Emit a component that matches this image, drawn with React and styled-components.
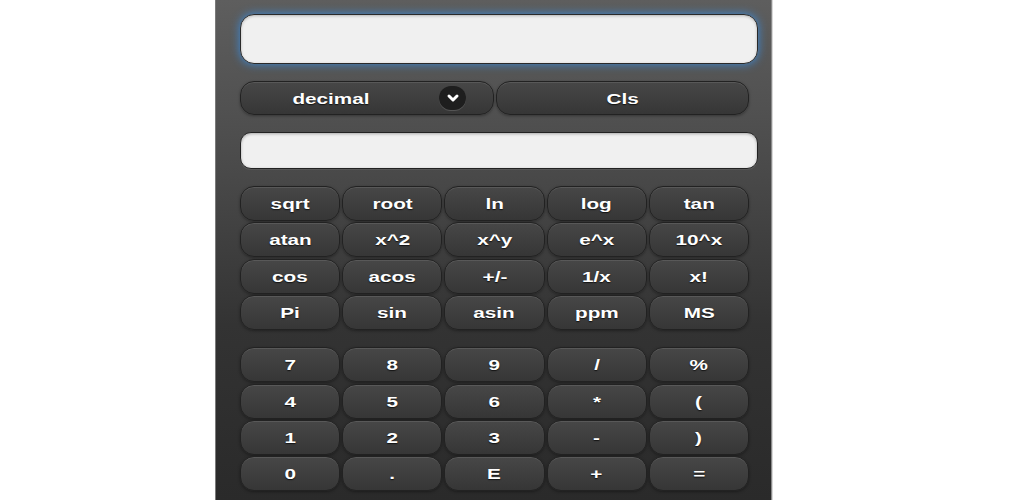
import React from 'react'
import styled, { createGlobalStyle } from 'styled-components'

const GlobalStyle = createGlobalStyle`
    html, body {
        margin: 0;
        padding: 0;
        background: #fff;
        font-family: "Liberation Sans", Arial, sans-serif;
    }
`

const scientific = [
    'sqrt', 'root', 'ln', 'log', 'tan',
    'atan', 'x^2', 'x^y', 'e^x', '10^x',
    'cos', 'acos', '+/-', '1/x', 'x!',
    'Pi', 'sin', 'asin', 'ppm', 'MS',
]

const basic = [
    '7', '8', '9', '/', '%',
    '4', '5', '6', '*', '(',
    '1', '2', '3', '-', ')',
    '0', '.', 'E', '+', '=',
]

function App() {
    return (
        <>
        <GlobalStyle />
        <Page>
            <Panel>
                <Display readOnly />
                <ControlRow>
                    <Button as="div">
                        <Label $shift={-72}>decimal</Label>
                        <ArrowIcon>
                            <svg width="14" height="14" viewBox="0 0 14 14">
                                <path d="M3 5 L7 9 L11 5" fill="none" stroke="#fff" strokeWidth="3" strokeLinecap="round" strokeLinejoin="round" />
                            </svg>
                        </ArrowIcon>
                    </Button>
                    <Button><Label>Cls</Label></Button>
                </ControlRow>
                <Entry readOnly />
                <Keys>
                    {scientific.map((k) => <Button key={k}><Label>{k}</Label></Button>)}
                </Keys>
                <Keys $top={17}>
                    {basic.map((k) => <Button key={k}><Label>{k}</Label></Button>)}
                </Keys>
            </Panel>
        </Page>
        </>
    )
}

export default App

const Page = styled.div`
    display: flex;
    justify-content: flex-start;
    height: 500px;
    overflow: hidden;
    background: #fff;
`

const Panel = styled.div`
    margin-left: 215px;
    width: 557px;
    height: 500px;
    box-sizing: border-box;
    padding: 14px 14px 0 24px;
    background: linear-gradient(#5e5e5e 0%, #494949 35%, #333 65%, #2a2a2a 100%);
    border-left: 1px solid #7a7a7a;
    border-right: 1px solid #8a8a8a;
    box-shadow: 1px 0 0 #d8d8d8;
`

const Display = styled.input`
    display: block;
    box-sizing: border-box;
    width: 518px;
    height: 50px;
    margin: 0;
    border: 1px solid #2a2a2a;
    border-radius: 14px;
    background: #f0f0f0;
    box-shadow: 0 0 10px #3b8ad8, inset 0 1px 3px rgba(0, 0, 0, 0.25);
    outline: none;
`

const Entry = styled(Display)`
    height: 37px;
    border-radius: 11px;
    margin-top: 17px;
    border-color: #222;
    box-shadow: inset 0 1px 3px rgba(0, 0, 0, 0.3), 0 1px 0 rgba(255, 255, 255, 0.08);
`

const ControlRow = styled.div`
    display: grid;
    grid-template-columns: 254px 253px;
    column-gap: 2px;
    margin-top: 17px;
    height: 34px;
`

const Keys = styled.div`
    display: grid;
    grid-template-columns: repeat(5, 1fr);
    column-gap: 2px;
    row-gap: 1.4px;
    grid-auto-rows: 35px;
    width: 509px;
    margin-top: ${(p) => p.$top || 17}px;
`

const Button = styled.button`
    position: relative;
    display: flex;
    align-items: center;
    justify-content: center;
    box-sizing: border-box;
    margin: 0;
    padding: 0;
    border: 1px solid #222;
    border-radius: 14px;
    background: linear-gradient(#474747, #363636);
    box-shadow: inset 0 1px 0 rgba(255, 255, 255, 0.1), 0 1px 3px rgba(0, 0, 0, 0.35);
    color: #fff;
    font-family: "Liberation Sans", Arial, sans-serif;
    font-weight: bold;
    font-size: 15px;
    text-shadow: 0 1px 1px #111;
    cursor: pointer;
`

const Label = styled.span`
    display: inline-block;
    transform: translateX(${(p) => (p.$shift || 0) / 2}px) scaleX(1.38);
`

const ArrowIcon = styled.span`
    position: absolute;
    right: 27px;
    top: 50%;
    transform: translateY(-50%);
    width: 27px;
    height: 24px;
    border-radius: 12px;
    background: #1e1e1e;
    box-shadow: 0 1px 0 rgba(255, 255, 255, 0.15);
    display: flex;
    align-items: center;
    justify-content: center;
`
